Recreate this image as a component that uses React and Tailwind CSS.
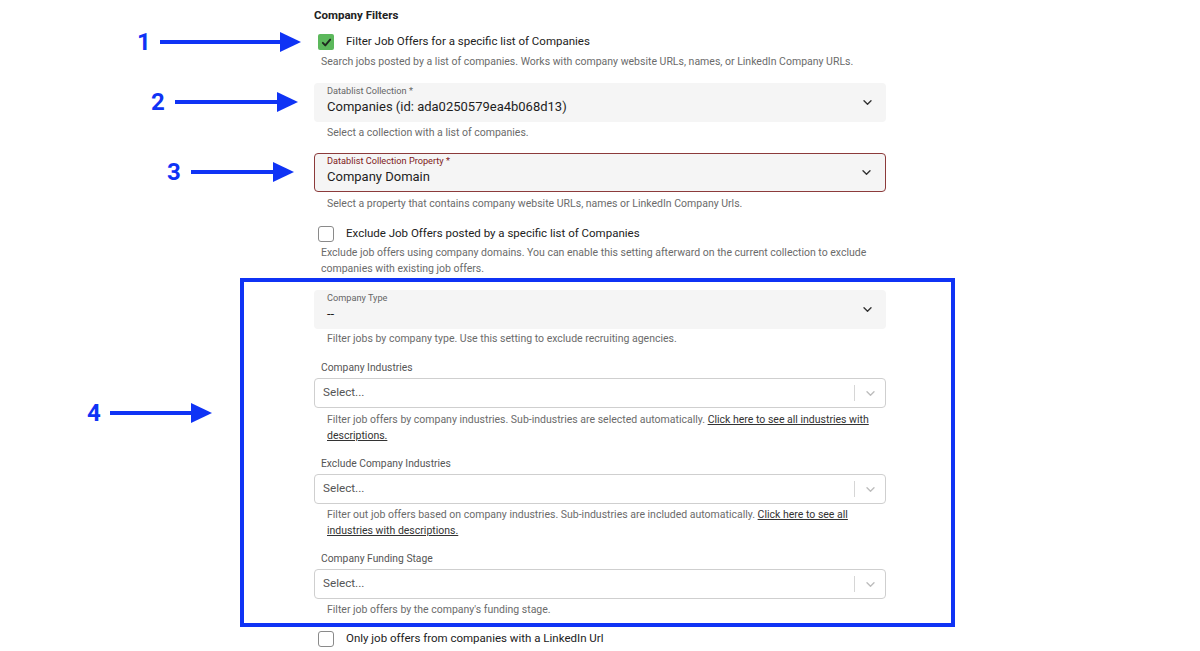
import React from "react";

const BLUE = "#0f33f5";

// small chevron used by the selects
const Chevron = ({ className }) => (
    <svg viewBox="0 0 12 8" className={className} fill="none" stroke="currentColor" strokeWidth="1.6" strokeLinecap="round" strokeLinejoin="round">
        <path d="M2 2l4 4 4-4" />
    </svg>
);

function Checkbox({ checked }) {
    return checked ? (
        <span className="flex h-[16px] w-[16px] items-center justify-center rounded-[2px] bg-[#5cb85c]">
            <svg viewBox="0 0 16 16" className="h-[13px] w-[13px]" fill="none" stroke="#1f2a1f" strokeWidth="2.4" strokeLinecap="round" strokeLinejoin="round">
                <path d="M3.5 8.5l3 3 6-7" />
            </svg>
        </span>
    ) : (
        <span className="h-[16px] w-[16px] rounded-[3px] border border-[#8a8a8a] bg-white" />
    );
}

function CheckRow({ checked, label, className = "" }) {
    return (
        <div className={`flex h-[24px] items-center pl-[4px] ${className}`}>
            <Checkbox checked={checked} />
            <span className="ml-[12px] text-[11.5px] text-[#222]">{label}</span>
        </div>
    );
}

function Helper({ children, indent = "pl-[13px]", className = "" }) {
    return (
        <p className={`${indent} text-[10.5px] leading-[16px] tracking-[0px] text-[#6b6b6b] ${className}`}>
            {children}
        </p>
    );
}

function FilledSelect({ label, value, error, className = "" }) {
    return (
        <div
            className={`flex h-[39px] items-center justify-between rounded-[4px] bg-[#f5f5f5] pb-[3px] pr-[13px] ${
                error ? "border border-[#8c3b3b] pl-[12px]" : "pl-[13px]"
            } ${className}`}
        >
            <div className="flex flex-col">
                <span className={`text-[9.2px] leading-[12px] ${error ? "text-[#7d2020]" : "text-[#666]"}`}>{label}</span>
                <span className="text-[13px] leading-[20px] text-[#1e1e1e]">{value}</span>
            </div>
            <Chevron className="mt-[3px] h-[7px] w-[11px] text-[#333]" />
        </div>
    );
}

function OutlinedSelect({ className = "" }) {
    return (
        <div className={`flex h-[30px] items-center rounded-[4px] border border-[#cfcfcf] bg-white ${className}`}>
            <span className="flex-1 pl-[8px] text-[11.7px] text-[#555]">Select...</span>
            <span className="h-[16px] w-px bg-[#d6d6d6]" />
            <span className="flex w-[30px] justify-center">
                <Chevron className="h-[7px] w-[11px] text-[#bdbdbd]" />
            </span>
        </div>
    );
}

function FieldLabel({ children, className = "" }) {
    return <div className={`pl-[7px] text-[10.3px] leading-[16px] text-[#555] ${className}`}>{children}</div>;
}

function Arrow({ number, numLeft, lineLeft, tipX, y }) {
    return (
        <div className="absolute" style={{ left: 0, top: y - 14 }}>
            <span className="absolute text-[24px] font-bold leading-[28px] text-[#0f33f5]" style={{ left: numLeft }}>
                {number}
            </span>
            <span className="absolute h-[4px] bg-[#0f33f5]" style={{ left: lineLeft, top: 12, width: tipX - 18 - lineLeft }} />
            <svg className="absolute" style={{ left: tipX - 21, top: 4 }} width="21" height="20" viewBox="0 0 21 20">
                <path d="M0 0L21 10L0 20Z" fill={BLUE} />
            </svg>
        </div>
    );
}

export default function App() {
    return (
        <div className="relative h-[651px] w-[1200px] overflow-hidden bg-white" style={{ fontFamily: "Roboto, 'Liberation Sans', sans-serif" }}>
            <div className="ml-[314px] w-[572px]">
                <h3 className="text-[11.5px] font-bold leading-[30px] text-[#222]">Company Filters</h3>

                <CheckRow checked label="Filter Job Offers for a specific list of Companies" />
                <Helper indent="pl-[7px]">
                    Search jobs posted by a list of companies. Works with company website URLs, names, or LinkedIn Company URLs.
                </Helper>

                <FilledSelect className="mt-[13px]" label="Datablist Collection *" value="Companies (id: ada0250579ea4b068d13)" />
                <Helper className="mt-[3px]">Select a collection with a list of companies.</Helper>

                <FilledSelect className="mt-[12px]" error label="Datablist Collection Property *" value="Company Domain" />
                <Helper className="mt-[4px]">Select a property that contains company website URLs, names or LinkedIn Company Urls.</Helper>

                <CheckRow className="mt-[10px]" label="Exclude Job Offers posted by a specific list of Companies" />
                <Helper indent="pl-[7px]" className="mt-[-1px]">
                    Exclude job offers using company domains. You can enable this setting afterward on the current collection to exclude companies with existing job offers.
                </Helper>

                <FilledSelect className="mt-[13px]" label="Company Type" value="--" />
                <Helper className="mt-[2px]">Filter jobs by company type. Use this setting to exclude recruiting agencies.</Helper>

                <FieldLabel className="mt-[13px]">Company Industries</FieldLabel>
                <OutlinedSelect className="mt-[2px]" />
                <Helper className="mt-[4px]">
                    Filter job offers by company industries. Sub-industries are selected automatically.{" "}
                    <a className="text-[#333] underline">Click here to see all industries with descriptions.</a>
                </Helper>

                <FieldLabel className="mt-[12px]">Exclude Company Industries</FieldLabel>
                <OutlinedSelect className="mt-[2px]" />
                <Helper className="mt-[3px]">
                    Filter out job offers based on company industries. Sub-industries are included automatically.{" "}
                    <a className="text-[#333] underline">Click here to see all industries with descriptions.</a>
                </Helper>

                <FieldLabel className="mt-[12px]">Company Funding Stage</FieldLabel>
                <OutlinedSelect className="mt-[2px]" />
                <Helper className="mt-[3px]">Filter job offers by the company's funding stage.</Helper>

                <CheckRow className="mt-[9px]" label="Only job offers from companies with a LinkedIn Url" />
            </div>

            {/* annotations */}
            <div className="absolute left-[240px] top-[278px] h-[349px] w-[715px] border-4 border-[#0f33f5]" />
            <Arrow number="1" numLeft={137} lineLeft={160} tipX={301} y={42} />
            <Arrow number="2" numLeft={151} lineLeft={175} tipX={298} y={102} />
            <Arrow number="3" numLeft={167} lineLeft={191} tipX={294} y={172} />
            <Arrow number="4" numLeft={87} lineLeft={110} tipX={212} y={413} />
        </div>
    );
}
